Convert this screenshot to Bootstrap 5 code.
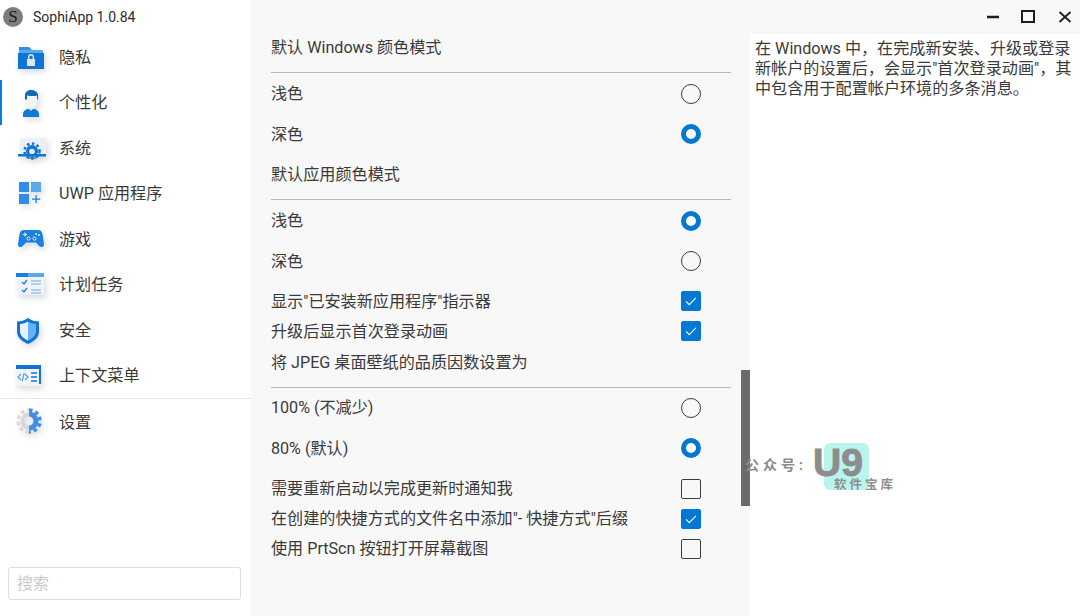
<!DOCTYPE html>
<html lang="zh-CN">
<head>
    <meta charset="UTF-8">
    <meta name="viewport" content="width=device-width, initial-scale=1.0">
    <title>SophiApp</title>
    <link href="https://cdn.jsdelivr.net/npm/bootstrap@5.3.3/dist/css/bootstrap.min.css" rel="stylesheet">
    <style>
        html, body { height: 616px; overflow: hidden; }
        body { font-family: Roboto, "Noto Sans CJK SC", sans-serif; font-size: 16.13px; line-height: 20px; color: #3a3a3a; background: #fff; }
        .side-pane { width: 251px; height: 616px; background: #fff; }
        .app-head { height: 34px; padding-left: 3px; font-size: 14px; color: #2b2b2b; }
        .app-logo { width: 20px; height: 20px; margin-right: 10px; background: #7d7d7d; font-family: "Liberation Serif", serif; font-size: 17px; color: #1c1c1c; }
        .menu-row { height: 45.5px; padding: 2px 0 0 16px; color: #3a3a3a; text-decoration: none; }
        .menu-row.is-active { box-shadow: inset 2px 0 0 #0a7bdc; }
        .menu-row svg { width: 30px; height: 30px; margin: -2px 13px 0 0; flex: none; filter: drop-shadow(2px 3px 3px rgba(60,70,90,.2)); }
        .menu-sep { border-top: 1px solid #e6e6e6; }
        .find-box { margin: auto 10px 16px 8px; height: 33px; width: 233px; padding: 0 8px; font-size: 16px; border: 1px solid #dedede; border-radius: 3px; color: #333; }
        .find-box::placeholder { color: #c9c9c9; }
        .work-area { width: 829px; background: #f8f8f8; position: relative; }
        .win-bar { height: 34px; gap: 21px; padding-right: 8px; }
        .win-bar svg { width: 14px; height: 14px; }
        .win-bar svg.win-max { margin-right: 2px; }
        .opt-pane { width: 499px; padding: 0 19px 0 20px; }
        .note-pane { width: 330px; background: #fff; padding: 5px 4px 0 5px; height: 582px; }
        .opt-head { padding-bottom: 14px; border-bottom: 1px solid #b9b9b9; }
        .opt-head.first { padding-top: 4px; }
        .opt-head.second { padding-top: 11px; }
        .opt-head.third { padding-top: 7px; margin-bottom: -1px; }
        .opt-radio { height: 40.5px; padding: 2px 30px 0 0; }
        .opt-check { height: 30px; padding: 2px 30px 0 0; }
        .opt-group { margin-top: 5px; }
        .form-check-input { width: 20px; height: 20px; margin: -1px 0 0; background-color: transparent; border: 1px solid #3c3c3c; flex: none; }
        .form-check-input[type=checkbox] { border-radius: 2px; margin-top: -2px; }
        .form-check-input:checked { background-color: #0078d4; border-color: #0078d4; }
        .form-check-input:checked[type=checkbox] { background-image: url("data:image/svg+xml,%3csvg xmlns='http://www.w3.org/2000/svg' viewBox='0 0 20 20'%3e%3cpath fill='none' stroke='%23fff' stroke-width='1.3' d='M4.5 10.5l3.5 3.5 7.5-7.5'/%3e%3c/svg%3e"); }
        .form-check-input:checked[type=radio] { background-image: none; background-color: #fff; border: 5.5px solid #0078d4; }
        .opt-group.last-group { margin-top: 6px; }
        .last-group .opt-check { padding-top: 0; }
        .last-group .form-check-input[type=checkbox] { margin-top: 0; }
        .scroll-thumb { position: absolute; left: 490px; top: 370px; width: 9px; height: 136px; background: #6b6b6b; }
        .wm-mark { position: absolute; left: 745px; top: 443px; width: 150px; height: 48px; }
        .wm-tile { position: absolute; left: 79px; top: 0; width: 45px; height: 47px; background: #b9f5ee; border-radius: 6px; }
        .wm-gzh { position: absolute; left: 0; top: 12px; font-size: 14px; font-weight: 700; letter-spacing: 4px; color: #8a8a8a; white-space: nowrap; }
        .wm-u9 { position: absolute; left: 68px; top: 5px; font-family: "Liberation Sans", sans-serif; font-size: 39px; line-height: 30px; font-weight: 700; -webkit-text-stroke: 1px #8d8d8d; color: #8d8d8d; }
        .wm-lib { position: absolute; left: 89px; top: 35px; font-size: 12.5px; line-height: 14px; font-weight: 700; letter-spacing: 3px; color: #8f8f8f; white-space: nowrap; }
    </style>
</head>

<body class="d-flex">
    <div class="side-pane d-flex flex-column">
        <div class="app-head d-flex align-items-center">
            <span class="app-logo rounded-circle d-flex align-items-center justify-content-center">S</span>
            SophiApp 1.0.84
        </div>
        <a class="menu-row d-flex align-items-center" href="#">
            <svg viewBox="0 0 30 30"><path fill="#2f8cea" d="M3 5h10l3 3h-13z"/><path fill="#5aa9ef" d="M3 8h24v3H3z"/><path fill="#0f74d8" d="M2 11h26v16H2z"/><rect x="11" y="17" width="8" height="7" fill="#dfe8f2"/><path fill="none" stroke="#dfe8f2" stroke-width="1.4" d="M12.7 17v-2a2.3 2.3 0 0 1 4.6 0v2"/></svg>
            隐私
        </a>
        <a class="menu-row is-active d-flex align-items-center" href="#">
            <svg viewBox="0 0 30 30"><path fill="#f3f3f3" d="M10 8h11v9l-3 4h-5l-3-4z"/><path fill="#1268b8" d="M9 13V8c0-3 3-5 6-5s7 2 7 5v5l-1-1V8.500c-2 .8-6 .8-10 0V12z"/><path fill="#0f78da" d="M7 30v-3c0-3 3-5 6-5l2 2 2-2c3 0 6 2 6 5v3z"/></svg>
            个性化
        </a>
        <a class="menu-row d-flex align-items-center" href="#">
            <svg viewBox="0 0 30 30"><path fill="#eceff4" d="M4 5h26v17H4z"/><path fill="#8e8e8e" d="M12 24h8v2h-8z"/><circle cx="16" cy="18" r="6" fill="#0f74d8"/><circle cx="16" cy="18" r="7.500" fill="none" stroke="#0f74d8" stroke-width="2.500" stroke-dasharray="2.500 2.500"/><circle cx="16" cy="18.500" r="2.800" fill="#eceff4"/><path fill="#0f74d8" d="M2 21h28v2.500H2z"/></svg>
            系统
        </a>
        <a class="menu-row d-flex align-items-center" href="#">
            <svg viewBox="0 0 30 30"><path fill="#2f8cea" d="M3 4h10v10H3z"/><path fill="#5aa9ef" d="M15 4h10v10H15z"/><path fill="#2f8cea" d="M3 16h10v10H3z"/><path fill="#1a7fe2" d="M19.500 17h1.300v3.500h3.500v1.300h-3.500v3.500h-1.300v-3.500H16v-1.300h3.500z"/></svg>
            UWP 应用程序
        </a>
        <a class="menu-row d-flex align-items-center" href="#">
            <svg viewBox="0 0 30 30"><path fill="#1b80e4" d="M8 6h14c2.500 0 4 1.500 4.500 4l1.500 10c.3 3-3 4-5 1.800L20 18.500H10l-3 3.300C5 24 1.700 23 2 20L3.500 10C4 7.500 5.500 6 8 6z"/><path fill="none" stroke="#e9f2fb" stroke-width="1.200" d="M7 10.500h4M9 8.500v4"/><circle cx="18.500" cy="14.500" r="1.600" fill="none" stroke="#e9f2fb"/><circle cx="12.500" cy="14.500" r="1.600" fill="none" stroke="#e9f2fb"/><circle cx="20" cy="10" r="1" fill="#e9f2fb"/><circle cx="23" cy="11" r="1" fill="#e9f2fb"/></svg>
            游戏
        </a>
        <a class="menu-row d-flex align-items-center" href="#">
            <svg viewBox="0 0 30 30"><path fill="#f0f3f8" d="M1 7h27v19H1z"/><path fill="#1b7ddf" d="M0 4h12v4H0z"/><path fill="#5aa9ef" d="M12 4h16v4H12z"/><path fill="none" stroke="#1b7ddf" stroke-width="1.300" d="M6 13l2 2 3-4M6 21l2 2 3-4"/><path fill="none" stroke="#9cc3ec" stroke-width="1.400" d="M15 12h10M15 15h10M15 21h10M15 24h10"/></svg>
            计划任务
        </a>
        <a class="menu-row d-flex align-items-center" href="#">
            <svg viewBox="0 0 30 30"><path fill="#1272d6" d="M12 3c3 2.500 7 3.500 11 3.500v10c0 6-5 10-11 12.500C6 26.500 1 22.500 1 16.500v-10C5 6.500 9 5.500 12 3z"/><path fill="#e8f1fb" d="M12 6.500v19c-4.500-2-8-5-8-9.500V9c3 0 5.500-1 8-2.500z"/><path fill="#66b2f5" d="M12 6.500c2.500 1.500 5 2.500 8 2.500v7c0 4.500-3.500 7.500-8 9.500z"/></svg>
            安全
        </a>
        <a class="menu-row d-flex align-items-center" href="#">
            <svg viewBox="0 0 30 30"><path fill="#f1f4f8" d="M0 8h25v18H0z"/><path fill="#1272d6" d="M0 5h25v4H0zM23 9h2v15h-2z"/><path fill="none" stroke="#4b9ae8" stroke-width="1.100" d="M5 14l-3 3 3 3M9 14l3 3-3 3M8.200 13l-2 8"/><path fill="none" stroke="#1272d6" stroke-width="1.300" d="M15 13h6M15 17h6M15 21h6"/></svg>
            上下文菜单
        </a>
        <div class="menu-sep"></div>
        <a class="menu-row d-flex align-items-center" href="#">
            <svg viewBox="0 0 30 30"><path fill="none" stroke="#d8d8d8" stroke-width="4" d="M13 20.500a6.500 6.500 0 0 1 0-13"/><path fill="none" stroke="#d8d8d8" stroke-width="3" stroke-dasharray="3.500 3" d="M13 25a11 11 0 0 1 0-22"/><path fill="none" stroke="#3f8fe8" stroke-width="5" d="M13 7a7 7 0 0 1 0 14"/><path fill="none" stroke="#3f8fe8" stroke-width="3.500" stroke-dasharray="3.500 3" d="M13 3a11 11 0 0 1 0 22"/></svg>
            设置
        </a>
        <input class="find-box" type="text" placeholder="搜索">
    </div>

    <div class="work-area d-flex flex-column">
        <div class="win-bar d-flex align-items-center justify-content-end">
            <svg viewBox="0 0 14 14"><path d="M1 7h12" stroke="#1c1c1c" stroke-width="2.500"/></svg>
            <svg class="win-max" viewBox="0 0 14 14"><path d="M1 1h12v11H1z" fill="none" stroke="#1c1c1c" stroke-width="2"/></svg>
            <svg viewBox="0 0 14 14"><path d="M1.500 2l11 10M12.500 2l-11 10" stroke="#1c1c1c" stroke-width="1.800"/></svg>
        </div>
        <div class="d-flex flex-grow-1">
            <div class="opt-pane">
                <div class="opt-head first">默认 Windows 颜色模式</div>
                <label class="opt-radio d-flex align-items-center justify-content-between">浅色<input class="form-check-input" type="radio" name="winMode"></label>
                <label class="opt-radio d-flex align-items-center justify-content-between">深色<input class="form-check-input" type="radio" name="winMode" checked></label>
                <div class="opt-head second">默认应用颜色模式</div>
                <label class="opt-radio d-flex align-items-center justify-content-between">浅色<input class="form-check-input" type="radio" name="appMode" checked></label>
                <label class="opt-radio d-flex align-items-center justify-content-between">深色<input class="form-check-input" type="radio" name="appMode"></label>
                <div class="opt-group">
                    <label class="opt-check d-flex align-items-center justify-content-between">显示"已安装新应用程序"指示器<input class="form-check-input" type="checkbox" checked></label>
                    <label class="opt-check d-flex align-items-center justify-content-between">升级后显示首次登录动画<input class="form-check-input" type="checkbox" checked></label>
                </div>
                <div class="opt-head third">将 JPEG 桌面壁纸的品质因数设置为</div>
                <label class="opt-radio d-flex align-items-center justify-content-between">100% (不减少)<input class="form-check-input" type="radio" name="jpeg"></label>
                <label class="opt-radio d-flex align-items-center justify-content-between">80% (默认)<input class="form-check-input" type="radio" name="jpeg" checked></label>
                <div class="opt-group last-group">
                    <label class="opt-check d-flex align-items-center justify-content-between">需要重新启动以完成更新时通知我<input class="form-check-input" type="checkbox"></label>
                    <label class="opt-check d-flex align-items-center justify-content-between">在创建的快捷方式的文件名中添加"- 快捷方式"后缀<input class="form-check-input" type="checkbox" checked></label>
                    <label class="opt-check d-flex align-items-center justify-content-between">使用 PrtScn 按钮打开屏幕截图<input class="form-check-input" type="checkbox"></label>
                </div>
            </div>
            <div class="note-pane">在 Windows 中，在完成新安装、升级或登录新帐户的设置后，会显示"首次登录动画"，其中包含用于配置帐户环境的多条消息。</div>
        </div>
        <div class="scroll-thumb"></div>
    </div>

    <div class="wm-mark">
        <div class="wm-tile"></div>
        <div class="wm-gzh">公众号:</div>
        <div class="wm-u9">U9</div>
        <div class="wm-lib">软件宝库</div>
    </div>
</body>
</html>
